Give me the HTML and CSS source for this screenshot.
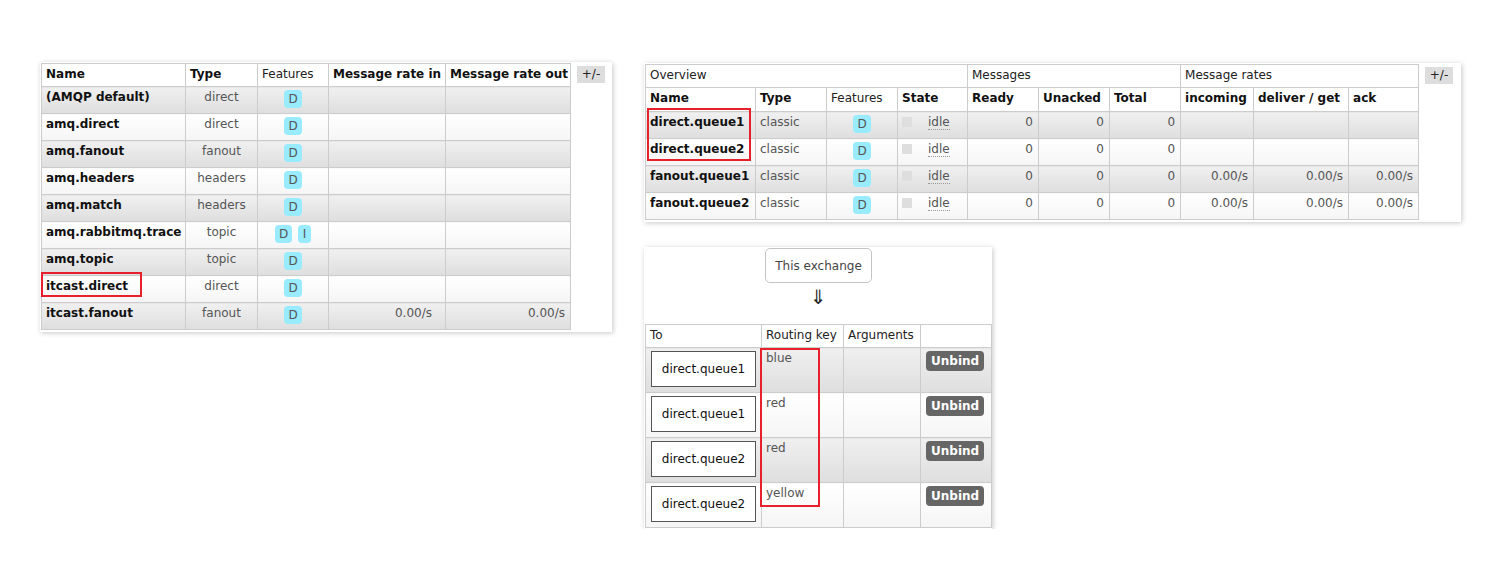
FILE: index.html
```html
<!DOCTYPE html>
<html lang="en">
<head>
<meta charset="utf-8">
<title>RabbitMQ exchanges and queues</title>
<link rel="stylesheet" href="styles.css">
</head>
<body>
<div class="page">
  <section class="panel panel-exchanges">
    <table class="list list-exchanges">
      <colgroup>
        <col class="c-ex-name"><col class="c-ex-type"><col class="c-ex-feat"><col class="c-ex-in"><col class="c-ex-out">
      </colgroup>
      <thead>
        <tr><th>Name</th><th>Type</th><th class="plain">Features</th><th>Message rate in</th><th>Message rate out</th></tr>
      </thead>
      <tbody>
        <tr class="alt1"><td class="name">(AMQP default)</td><td class="c">direct</td><td class="c"><abbr class="feat">D</abbr></td><td class="r rin"></td><td class="r"></td></tr>
        <tr class="alt2"><td class="name">amq.direct</td><td class="c">direct</td><td class="c"><abbr class="feat">D</abbr></td><td class="r rin"></td><td class="r"></td></tr>
        <tr class="alt1"><td class="name">amq.fanout</td><td class="c">fanout</td><td class="c"><abbr class="feat">D</abbr></td><td class="r rin"></td><td class="r"></td></tr>
        <tr class="alt2"><td class="name">amq.headers</td><td class="c">headers</td><td class="c"><abbr class="feat">D</abbr></td><td class="r rin"></td><td class="r"></td></tr>
        <tr class="alt1"><td class="name">amq.match</td><td class="c">headers</td><td class="c"><abbr class="feat">D</abbr></td><td class="r rin"></td><td class="r"></td></tr>
        <tr class="alt2"><td class="name">amq.rabbitmq.trace</td><td class="c">topic</td><td class="c"><abbr class="feat">D</abbr> <abbr class="feat">I</abbr></td><td class="r rin"></td><td class="r"></td></tr>
        <tr class="alt1"><td class="name">amq.topic</td><td class="c">topic</td><td class="c"><abbr class="feat">D</abbr></td><td class="r rin"></td><td class="r"></td></tr>
        <tr class="alt2"><td class="name">itcast.direct</td><td class="c">direct</td><td class="c"><abbr class="feat">D</abbr></td><td class="r rin"></td><td class="r"></td></tr>
        <tr class="alt1"><td class="name">itcast.fanout</td><td class="c">fanout</td><td class="c"><abbr class="feat">D</abbr></td><td class="r rin">0.00/s</td><td class="r">0.00/s</td></tr>
      </tbody>
    </table>
    <button class="toggle" type="button">+/-</button>
    <div class="mark mark-ex"></div>
  </section>

  <div class="col-right">
    <section class="panel panel-queues">
      <table class="list list-queues">
        <colgroup>
          <col class="c-q-name"><col class="c-q-type"><col class="c-q-feat"><col class="c-q-state"><col class="c-q-ready"><col class="c-q-unack"><col class="c-q-total"><col class="c-q-inc"><col class="c-q-del"><col class="c-q-ack">
        </colgroup>
        <thead>
          <tr class="group"><th colspan="4">Overview</th><th colspan="3">Messages</th><th colspan="3">Message rates</th></tr>
          <tr class="cols"><th>Name</th><th>Type</th><th class="plain">Features</th><th>State</th><th>Ready</th><th>Unacked</th><th>Total</th><th>incoming</th><th>deliver / get</th><th>ack</th></tr>
        </thead>
        <tbody>
          <tr class="alt1"><td class="name">direct.queue1</td><td>classic</td><td class="c"><abbr class="feat">D</abbr></td><td><div class="state"><span class="status-key"></span><abbr class="status">idle</abbr></div></td><td class="r">0</td><td class="r">0</td><td class="r">0</td><td class="r"></td><td class="r"></td><td class="r"></td></tr>
          <tr class="alt2"><td class="name">direct.queue2</td><td>classic</td><td class="c"><abbr class="feat">D</abbr></td><td><div class="state"><span class="status-key"></span><abbr class="status">idle</abbr></div></td><td class="r">0</td><td class="r">0</td><td class="r">0</td><td class="r"></td><td class="r"></td><td class="r"></td></tr>
          <tr class="alt1"><td class="name">fanout.queue1</td><td>classic</td><td class="c"><abbr class="feat">D</abbr></td><td><div class="state"><span class="status-key"></span><abbr class="status">idle</abbr></div></td><td class="r">0</td><td class="r">0</td><td class="r">0</td><td class="r">0.00/s</td><td class="r">0.00/s</td><td class="r">0.00/s</td></tr>
          <tr class="alt2"><td class="name">fanout.queue2</td><td>classic</td><td class="c"><abbr class="feat">D</abbr></td><td><div class="state"><span class="status-key"></span><abbr class="status">idle</abbr></div></td><td class="r">0</td><td class="r">0</td><td class="r">0</td><td class="r">0.00/s</td><td class="r">0.00/s</td><td class="r">0.00/s</td></tr>
        </tbody>
      </table>
      <button class="toggle" type="button">+/-</button>
      <div class="mark mark-q"></div>
    </section>

    <section class="panel panel-bindings">
      <div class="flow">
        <span class="this-exchange">This exchange</span>
        <div class="arrow">&#8659;</div>
      </div>
      <table class="list list-bindings">
        <colgroup>
          <col class="c-b-to"><col class="c-b-key"><col class="c-b-args"><col class="c-b-act">
        </colgroup>
        <thead>
          <tr><th class="plain">To</th><th class="plain">Routing key</th><th class="plain">Arguments</th><th></th></tr>
        </thead>
        <tbody>
          <tr class="alt1"><td><span class="object">direct.queue1</span></td><td>blue</td><td></td><td><button class="unbind" type="button">Unbind</button></td></tr>
          <tr class="alt2"><td><span class="object">direct.queue1</span></td><td>red</td><td></td><td><button class="unbind" type="button">Unbind</button></td></tr>
          <tr class="alt1"><td><span class="object">direct.queue2</span></td><td>red</td><td></td><td><button class="unbind" type="button">Unbind</button></td></tr>
          <tr class="alt2"><td><span class="object">direct.queue2</span></td><td>yellow</td><td></td><td><button class="unbind" type="button">Unbind</button></td></tr>
        </tbody>
      </table>
      <div class="mark mark-b"></div>
    </section>
  </div>
</div>
</body>
</html>
```
FILE: styles.css
```css
* { box-sizing: border-box; }

body {
  margin: 0;
  background: #fff;
  font-family: "DejaVu Sans", Verdana, sans-serif;
  font-size: 12px;
  line-height: 14px;
  color: #555;
}

.page {
  display: flex;
  align-items: flex-start;
  padding: 62px 0 0 40px;
}

.col-right {
  display: flex;
  flex-direction: column;
  align-items: flex-start;
  gap: 25px;
  margin-left: 32px;
  margin-top: 1px;
}

.panel {
  position: relative;
  display: flex;
  align-items: flex-start;
  background: #fff;
  padding: 1px 0 2px 1px;
  box-shadow: 1px 1px 5px rgba(0, 0, 0, 0.22);
}

.panel-exchanges { padding-right: 7px; }
.panel-queues { padding-right: 8px; }
.panel-bindings {
  flex-direction: column;
  align-items: stretch;
  width: 348px;
  padding: 0 0 1px 1px;
}

/* tables */
table.list {
  border-collapse: collapse;
  table-layout: fixed;
}
table.list th,
table.list td {
  border: 1px solid #ccc;
  padding: 3px 4px 5px 4px;
  vertical-align: top;
  text-align: left;
  white-space: nowrap;
  overflow: hidden;
}
table.list th {
  background: #fff;
  color: #111;
  font-weight: bold;
}
table.list tr.cols th { padding-bottom: 6px; }
table.list th.plain { font-weight: normal; color: #222; }
table.list tr.group th {
  font-weight: normal;
  color: #222;
}
table.list td.c { text-align: center; }
table.list td.r { text-align: right; padding-right: 5px; }
table.list td.rin { padding-right: 13px; }
table.list td.name { font-weight: bold; color: #111; }

tr.alt1 td { background: linear-gradient(#f0f0f0, #dedede); }
tr.alt2 td { background: linear-gradient(#ffffff, #f5f5f5); }

.list-exchanges { width: 529px; }
.c-ex-name { width: 144px; }
.c-ex-type { width: 72px; }
.c-ex-feat { width: 71px; }
.c-ex-in { width: 117px; }
.c-ex-out { width: 125px; }

.list-queues { width: 773px; }
.c-q-name { width: 110px; }
.c-q-type { width: 71px; }
.c-q-feat { width: 71px; }
.c-q-state { width: 70px; }
.c-q-ready { width: 71px; }
.c-q-unack { width: 71px; }
.c-q-total { width: 71px; }
.c-q-inc { width: 73px; }
.c-q-del { width: 95px; }
.c-q-ack { width: 70px; }

.list-bindings { width: 346px; }
.c-b-to { width: 116px; }
.c-b-key { width: 82px; }
.c-b-args { width: 77px; }
.c-b-act { width: 71px; }

/* feature badges */
abbr.feat {
  display: inline-block;
  vertical-align: top;
  background: #99ebff;
  color: #555;
  border-radius: 4px;
  padding: 2px 4px 2px 4px;
  min-width: 13px;
  text-decoration: none;
  line-height: 14px;
  margin: 0 1px;
}

/* state */
.state {
  display: flex;
  align-items: flex-start;
}
.status-key {
  display: block;
  width: 10px;
  height: 10px;
  margin-top: 2px;
  margin-right: 16px;
  background: #dedede;
}
abbr.status {
  text-decoration: none;
  border-bottom: 1px dotted #999;
  color: #555;
}

/* toggle */
.toggle {
  margin: 3px 0 0 6px;
  padding: 0;
  width: 28px;
  height: 17px;
  border: 0;
  background: #dddddd;
  color: #222;
  font: 12px/17px "DejaVu Sans", Verdana, sans-serif;
  text-align: center;
}

/* bindings */
.flow {
  display: flex;
  flex-direction: column;
  align-items: center;
  height: 77px;
}
.this-exchange {
  margin-top: 1px;
  padding: 10px 9px 9px;
  height: 35px;
  white-space: nowrap;
  text-align: center;
  border: 1px solid #c4c4c4;
  border-radius: 5px;
  color: #444;
  line-height: 14px;
}
.arrow {
  margin-top: 2px;
  font-size: 20px;
  line-height: 24px;
  color: #222;
}

.object {
  display: inline-block;
  margin-left: 1px;
  width: 105px;
  padding: 10px 0;
  text-align: center;
  border: 1px solid #555;
  background: #fff;
  color: #111;
  line-height: 14px;
}

.unbind {
  display: inline-block;
  margin-left: 1px;
  padding: 3px 5px;
  border: 0;
  border-radius: 4px;
  background: #666;
  color: #fff;
  font: bold 12px/14px "DejaVu Sans", Verdana, sans-serif;
}

/* red annotation frames */
.mark {
  position: absolute;
  border: 2px solid #e6212b;
  pointer-events: none;
}
.mark-ex { left: 1px; top: 210px; width: 101px; height: 25px; }
.mark-q { left: 3px; top: 45px; width: 104px; height: 53px; }
.mark-b { left: 116px; top: 101px; width: 60px; height: 159px; }
```
